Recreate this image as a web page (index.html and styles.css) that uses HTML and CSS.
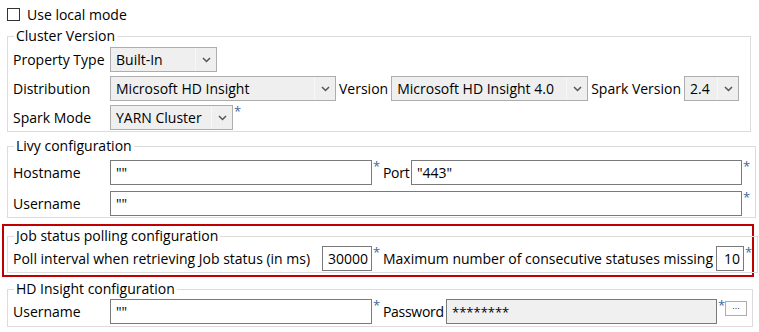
FILE: index.html
```html
<!DOCTYPE html>
<html>
<head>
    <title>Spark Configuration</title>
    <link rel="stylesheet" href="styles.css">
</head>
<body>
    <label class="check-row">
        <span class="checkbox"></span>
        <span>Use local mode</span>
    </label>

    <fieldset class="group cluster">
        <legend>Cluster Version</legend>
        <div class="row">
            <span class="label">Property Type</span>
            <div class="combo w-prop"><span class="combo-text">Built-In</span><span class="combo-arrow"><svg width="9" height="6" viewBox="0 0 9 6"><path d="M1 1 L4.5 4.5 L8 1" fill="none" stroke="#555" stroke-width="1.5"/></svg></span></div>
        </div>
        <div class="row">
            <span class="label">Distribution</span>
            <div class="combo w-dist"><span class="combo-text">Microsoft HD Insight</span><span class="combo-arrow"><svg width="9" height="6" viewBox="0 0 9 6"><path d="M1 1 L4.5 4.5 L8 1" fill="none" stroke="#555" stroke-width="1.5"/></svg></span></div>
            <span class="inline-label">Version</span>
            <div class="combo w-ver"><span class="combo-text">Microsoft HD Insight 4.0</span><span class="combo-arrow"><svg width="9" height="6" viewBox="0 0 9 6"><path d="M1 1 L4.5 4.5 L8 1" fill="none" stroke="#555" stroke-width="1.5"/></svg></span></div>
            <span class="inline-label">Spark Version</span>
            <div class="combo w-spark"><span class="combo-text">2.4</span><span class="combo-arrow"><svg width="9" height="6" viewBox="0 0 9 6"><path d="M1 1 L4.5 4.5 L8 1" fill="none" stroke="#555" stroke-width="1.5"/></svg></span></div>
        </div>
        <div class="row">
            <span class="label">Spark Mode</span>
            <div class="combo w-mode"><span class="combo-text">YARN Cluster</span><span class="combo-arrow"><svg width="9" height="6" viewBox="0 0 9 6"><path d="M1 1 L4.5 4.5 L8 1" fill="none" stroke="#555" stroke-width="1.5"/></svg></span></div>
            <span class="req">*</span>
        </div>
    </fieldset>

    <fieldset class="group livy">
        <legend>Livy configuration</legend>
        <div class="row">
            <span class="label">Hostname</span>
            <input class="field w-half" type="text" value='""'>
            <span class="req">*</span>
            <span class="inline-label lbl-port">Port</span>
            <input class="field w-port" type="text" value='"443"'>
            <span class="req">*</span>
        </div>
        <div class="row">
            <span class="label">Username</span>
            <input class="field w-full" type="text" value='""'>
            <span class="req">*</span>
        </div>
    </fieldset>

    <div class="highlight">
        <fieldset class="group polling">
            <legend>Job status polling configuration</legend>
            <div class="row">
                <span class="label-wide">Poll interval when retrieving Job status (in ms)</span>
                <input class="field num w-poll" type="text" value="30000">
                <span class="req">*</span>
                <span class="inline-label">Maximum number of consecutive statuses missing</span>
                <input class="field num w-miss" type="text" value="10">
                <span class="req">*</span>
            </div>
        </fieldset>
    </div>

    <fieldset class="group hdi">
        <legend>HD Insight configuration</legend>
        <div class="row">
            <span class="label">Username</span>
            <input class="field w-half" type="text" value='""'>
            <span class="req">*</span>
            <span class="inline-label lbl-pass">Password</span>
            <input class="field pass w-pass" type="text" value="********" readonly>
            <span class="req">*</span>
            <button class="dots">...</button>
        </div>
    </fieldset>
</body>
</html>
```

FILE: styles.css
```css
body {
    margin: 0;
    padding: 7px 0 0 0;
    font-family: "Open Sans", "Noto Sans", sans-serif;
    font-size: 14px;
    color: #000;
    background: #fff;
    width: 759px;
    height: 332px;
    overflow: hidden;
}
.check-row {
    display: flex;
    align-items: center;
    margin-left: 7px;
    height: 14px;
    gap: 7px;
}
.checkbox {
    width: 11px;
    height: 11px;
    border: 1px solid #333;
    background: #fff;
}
.group {
    margin: 0 0 0 7px;
    width: 744px;
    box-sizing: border-box;
    border: 1px solid #dcdcdc;
    padding: 0 5px;
}
.group legend {
    padding: 0 2px;
    margin-left: 1px;
    line-height: 20px;
}
.cluster {
    margin-top: 5px;
    padding-top: 1px;
    padding-bottom: 1px;
}
.cluster .row + .row {
    margin-top: 4px;
}
.livy {
    margin-top: 4px;
    padding-top: 4px;
    padding-bottom: 1px;
}
.livy .row + .row {
    margin-top: 6px;
}
.row {
    display: flex;
    align-items: center;
    height: 25px;
}
.label {
    width: 97px;
    flex: none;
}
.label-wide {
    flex: none;
    width: 309px;
}
.inline-label {
    margin: 0 3px;
    white-space: nowrap;
}
.lbl-port {
    width: 25px;
    flex: none;
    letter-spacing: -0.3px;
}
.lbl-pass {
    width: 58px;
    flex: none;
    margin-right: 5px;
    letter-spacing: -0.3px;
}
.combo {
    display: flex;
    height: 25px;
    box-sizing: border-box;
    border: 1px solid #adadad;
    background: #efefef;
    flex: none;
}
.combo-text {
    flex: 1;
    padding-left: 5px;
    line-height: 23px;
    white-space: nowrap;
    overflow: hidden;
}
.combo-arrow {
    width: 20px;
    border-left: 1px solid #f7f7f7;
    display: flex;
    align-items: center;
    justify-content: center;
}
.w-prop { width: 107px; }
.w-dist { width: 226px; }
.w-ver { width: 197px; }
.w-spark { width: 55px; }
.w-mode { width: 123px; }
.field {
    height: 25px;
    box-sizing: border-box;
    border: 1px solid #7a7a7a;
    background: #fff;
    font-family: inherit;
    font-size: 14px;
    padding: 0 0 0 5px;
    margin: 0;
    flex: none;
    outline: none;
    color: #000;
}
.field.num {
    text-align: right;
    padding: 0 3px 0 0;
}
.field.pass {
    background: #f0f0f0;
    font-size: 13px;
}
.w-half { width: 262px; }
.w-port { width: 331px; }
.w-full { width: 632px; }
.w-poll { width: 50px; }
.w-miss { width: 28px; }
.w-pass { width: 271px; }
.req {
    align-self: flex-start;
    color: #3b6a98;
    font-size: 13px;
    line-height: 13px;
    width: 7px;
    padding-left: 1px;
    flex: none;
}
.highlight {
    margin: 6px 0 0 2px;
    width: 752px;
    box-sizing: border-box;
    border: 2px solid #c00000;
    padding: 0 0 2px 3px;
}
.polling {
    margin: 0;
    width: 744px;
    padding-bottom: 1px;
}
.hdi {
    margin-top: 2px;
    padding-bottom: 2px;
}
.dots {
    align-self: flex-start;
    margin-top: 2px;
    margin-left: 0;
    width: 22px;
    height: 15px;
    border: 1px solid #adadad;
    background: #fdfdfd;
    font-size: 9px;
    line-height: 9px;
    padding: 0 0 4px 0;
    color: #333;
}
```
